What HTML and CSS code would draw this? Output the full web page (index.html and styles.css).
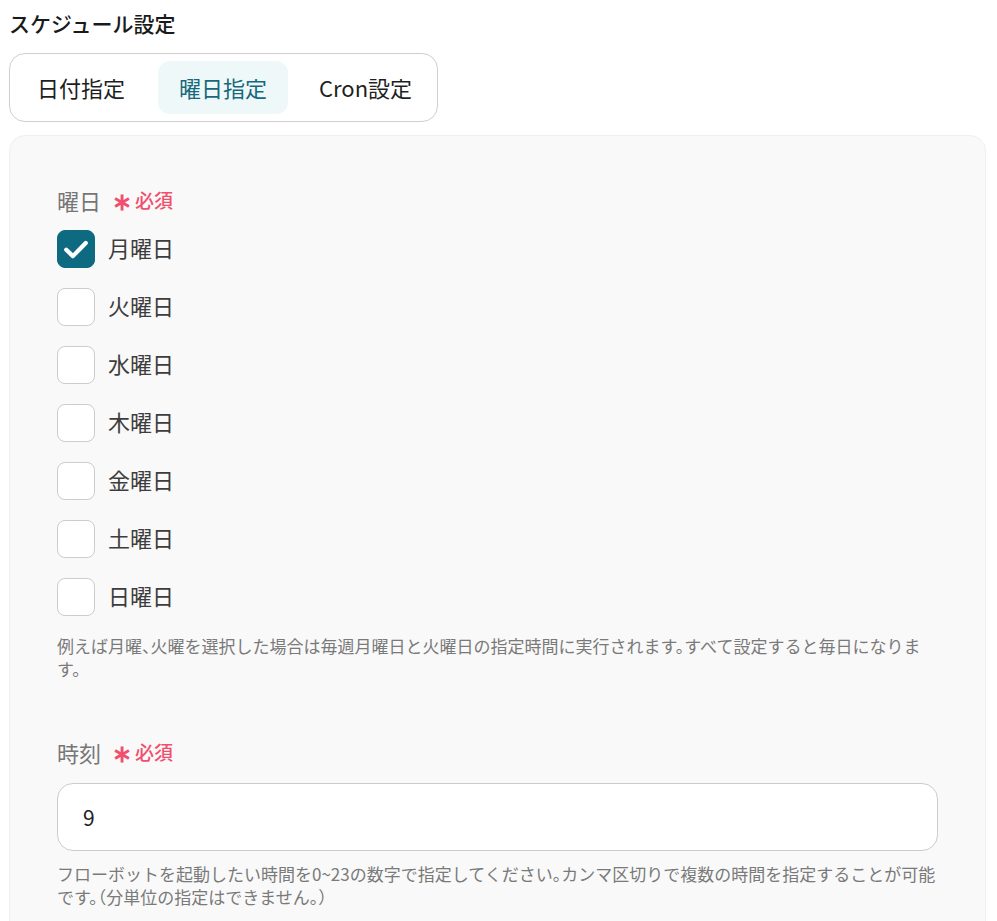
FILE: index.html
```html
<!DOCTYPE html>
<html lang="ja">
<head>
<meta charset="utf-8">
<link rel="stylesheet" href="styles.css">
</head>
<body>
<div class="page">
  <h1 class="title">スケジュール設定</h1>
  <div class="tabs">
    <div class="tab tab-first">日付指定</div>
    <div class="tab active">曜日指定</div>
    <div class="tab">Cron設定</div>
  </div>
  <div class="panel">
    <div class="field">
      <div class="label">曜日<span class="req"><span class="ast">∗</span>必須</span></div>
      <div class="checks">
        <div class="check-row"><span class="box checked"><svg viewBox="0 0 24 24" width="30" height="30"><path d="M4.2 12.6l5.3 5.1L19.8 7.2" fill="none" stroke="#fff" stroke-width="3.4" stroke-linecap="round" stroke-linejoin="round"/></svg></span><span class="check-label">月曜日</span></div>
        <div class="check-row"><span class="box"></span><span class="check-label">火曜日</span></div>
        <div class="check-row"><span class="box"></span><span class="check-label">水曜日</span></div>
        <div class="check-row"><span class="box"></span><span class="check-label">木曜日</span></div>
        <div class="check-row"><span class="box"></span><span class="check-label">金曜日</span></div>
        <div class="check-row"><span class="box"></span><span class="check-label">土曜日</span></div>
        <div class="check-row"><span class="box"></span><span class="check-label">日曜日</span></div>
      </div>
      <p class="help help-days">例えば月曜、火曜を選択した場合は毎週月曜日と火曜日の指定時間に実行されます。すべて設定すると毎日になります。</p>
    </div>
    <div class="field field-time">
      <div class="label">時刻<span class="req"><span class="ast">∗</span>必須</span></div>
      <div class="input">9</div>
      <p class="help help-time">フローボットを起動したい時間を0~23の数字で指定してください。カンマ区切りで複数の時間を指定することが可能です。（分単位の指定はできません。）</p>
    </div>
  </div>
</div>
</body>
</html>
```
FILE: styles.css
```css
* { box-sizing: border-box; }
html, body { margin: 0; padding: 0; background: #fff; }
body {
  font-family: "Noto Sans CJK JP", "Noto Sans", sans-serif;
  color: #222;
}
.page { padding: 0 11px 0 9px; }
.title {
  margin: 8px 0 0;
  font-size: 21px;
  font-weight: 500;
  line-height: 30px;
  color: #1a1a1a;
}
.tabs {
  margin-top: 15px;
  display: inline-flex;
  gap: 10px;
  padding: 7px 4px 7px 8px;
  border: 1px solid #cfcfcf;
  border-radius: 16px;
  background: #fff;
}
.tab {
  height: 53px;
  display: flex;
  align-items: center;
  padding: 0 21px 2px;
  font-size: 22px;
  color: #1f1f1f;
  border-radius: 12px;
}
.tab-first {
  padding-left: 19px;
  margin-right: 2px;
}
.tab.active {
  background: #eff8f8;
  color: #17687c;
}
.panel {
  margin-top: 13px;
  background: #f9f9f9;
  border: 1px solid #efefef;
  border-radius: 16px;
  padding: 50px 47px 40px;
  min-height: 800px;
}
.label {
  display: flex;
  align-items: center;
  font-size: 22px;
  line-height: 28px;
  color: #767676;
}
.req {
  display: inline-flex;
  align-items: center;
  margin-left: 11px;
  color: #f0506e;
  font-size: 19px;
  font-weight: 500;
}
.ast {
  font-size: 24px;
  font-weight: 700;
  margin-right: 3px;
  line-height: 1;
}
.checks {
  margin-top: 16px;
  display: flex;
  flex-direction: column;
  gap: 20px;
}
.check-row {
  display: flex;
  align-items: center;
  gap: 13px;
  height: 38px;
}
.box {
  width: 38px;
  height: 38px;
  border-radius: 8px;
  background: #fff;
  border: 1px solid #cccccc;
  display: flex;
  align-items: center;
  justify-content: center;
}
.box.checked {
  background: #0d6a80;
  border-color: #0d6a80;
}
.check-label {
  font-size: 22px;
  color: #3d3d3d;
  padding-bottom: 5px;
}
.help {
  margin: 18px 0 0;
  font-size: 17px;
  line-height: 23px;
  color: #7a7a7a;
  font-feature-settings: "halt";
}
.field-time { margin-top: 58px; }
.input {
  margin-top: 17px;
  height: 68px;
  background: #fff;
  border: 1px solid #cccccc;
  border-radius: 16px;
  display: flex;
  align-items: center;
  padding: 0 25px;
  font-size: 21px;
  color: #222;
}
.help-time { margin-top: 11px; }
```
